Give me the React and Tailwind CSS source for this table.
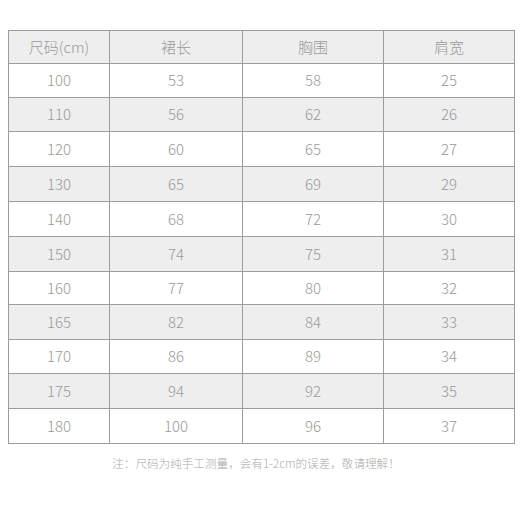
const rows = [
  ["100", "53", "58", "25", "h-[34px]"],
  ["110", "56", "62", "26", "h-[34px]"],
  ["120", "60", "65", "27", "h-[35px]"],
  ["130", "65", "69", "29", "h-[35px]"],
  ["140", "68", "72", "30", "h-[35px]"],
  ["150", "74", "75", "31", "h-[35px]"],
  ["160", "77", "80", "32", "h-[33px]"],
  ["165", "82", "84", "33", "h-[35px]"],
  ["170", "86", "89", "34", "h-[34px]"],
  ["175", "94", "92", "35", "h-[35px]"],
  ["180", "100", "96", "37", "h-[35px]"],
];

const cell = "border border-[#9c9c9c] text-center p-0";

export default function App() {
  return (
    <div
      className="w-[520px] h-[520px] bg-white pt-[30px] pl-[8px] text-[#9a9a9a] font-light"
      style={{ fontFamily: '"Noto Sans CJK SC", "Noto Sans", sans-serif' }}
    >
      <table className="table-fixed border-collapse w-[506px] text-[15px]">
        <colgroup>
          <col className="w-[101px]" />
          <col className="w-[133px]" />
          <col className="w-[141px]" />
          <col className="w-[131px]" />
        </colgroup>
        <thead>
          <tr className="h-[33px] bg-[#eeeeee]">
            <th className={cell + " font-light"}>尺码(cm)</th>
            <th className={cell + " font-light"}>裙长</th>
            <th className={cell + " font-light"}>胸围</th>
            <th className={cell + " font-light"}>肩宽</th>
          </tr>
        </thead>
        <tbody>
          {rows.map((r, i) => (
            <tr key={r[0]} className={r[4] + (i % 2 === 1 ? " bg-[#eeeeee]" : " bg-white")}>
              <td className={cell}>{r[0]}</td>
              <td className={cell}>{r[1]}</td>
              <td className={cell}>{r[2]}</td>
              <td className={cell}>{r[3]}</td>
            </tr>
          ))}
        </tbody>
      </table>
      <p className="mt-[10px] w-[506px] text-center pr-[10px] text-[11.6px] text-[#aaaaaa] leading-[18px]">
        注：尺码为纯手工测量，会有1-2cm的误差，敬请理解！
      </p>
    </div>
  );
}
